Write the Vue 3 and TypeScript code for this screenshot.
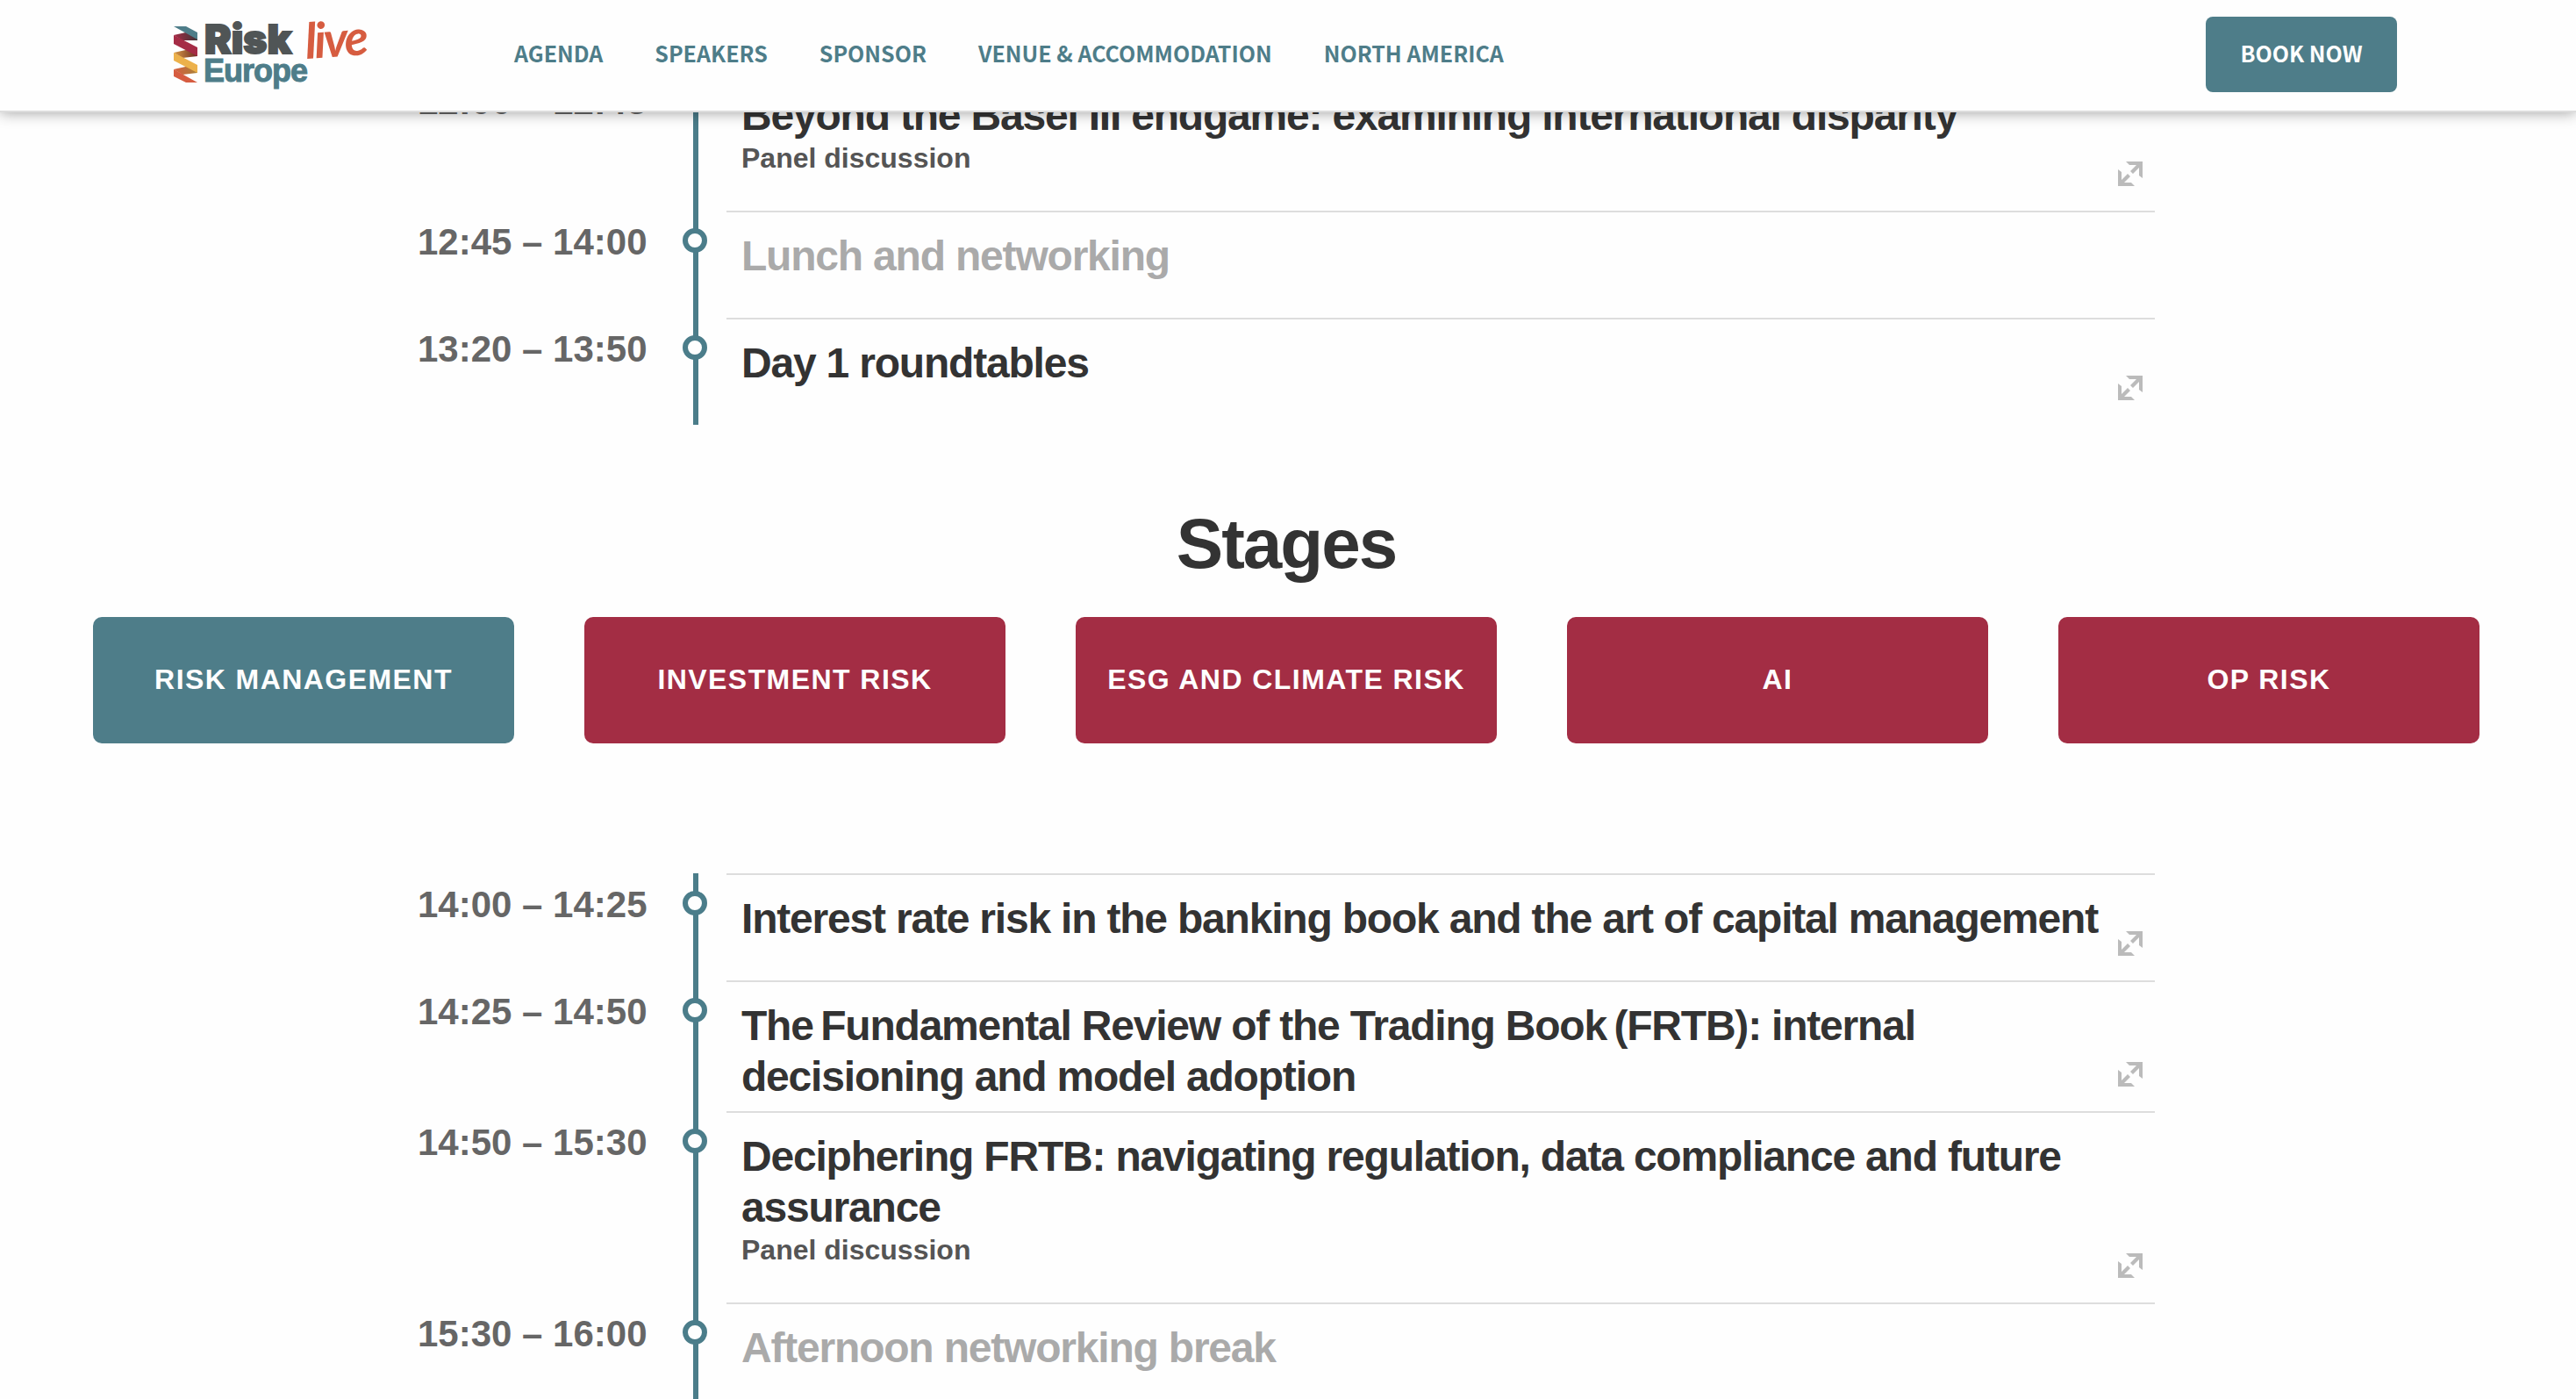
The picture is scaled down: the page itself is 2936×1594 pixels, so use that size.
<script setup lang="ts">
interface Session {
  time: string
  title: string
  kind?: string
  muted?: boolean
}

const navLinks: string[] = ['AGENDA', 'SPEAKERS', 'SPONSOR', 'VENUE & ACCOMMODATION', 'NORTH AMERICA']

const stages: string[] = ['RISK MANAGEMENT', 'INVESTMENT RISK', 'ESG AND CLIMATE RISK', 'AI', 'OP RISK']
const activeStage = 'RISK MANAGEMENT'

const schedule: { id: string; sessions: Session[] }[] = [
  {
    id: 'morning',
    sessions: [
      {
        time: '12:00 – 12:45',
        title: 'Beyond the Basel III endgame: examining international disparity',
        kind: 'Panel discussion',
      },
      { time: '12:45 – 14:00', title: 'Lunch and networking', muted: true },
      { time: '13:20 – 13:50', title: 'Day 1 roundtables' },
    ],
  },
  {
    id: 'afternoon',
    sessions: [
      { time: '14:00 – 14:25', title: 'Interest rate risk in the banking book and the art of capital management' },
      {
        time: '14:25 – 14:50',
        title: 'The\u2009Fundamental Review of the Trading Book\u2009(FRTB): internal decisioning and model adoption',
      },
      {
        time: '14:50 – 15:30',
        title: 'Deciphering FRTB: navigating regulation, data compliance and future assurance',
        kind: 'Panel discussion',
      },
      { time: '15:30 – 16:00', title: 'Afternoon networking break', muted: true },
    ],
  },
]
</script>

<template>
  <div class="page">
    <header class="site-header">
      <a class="logo" href="#" aria-label="Risk Live Europe">
        <svg width="224" height="96" viewBox="0 0 224 96">
          <defs>
            <linearGradient id="fold-red" x1="0" x2="1">
              <stop offset="0" stop-color="#a52c46" />
              <stop offset="1" stop-color="#3f3438" />
            </linearGradient>
            <linearGradient id="fold-gold" x1="0" x2="1">
              <stop offset="0" stop-color="#d99a45" />
              <stop offset="1" stop-color="#6b2a24" />
            </linearGradient>
            <linearGradient id="fold-orange" x1="0" x2="1">
              <stop offset="0" stop-color="#d65c40" />
              <stop offset="1" stop-color="#a98238" />
            </linearGradient>
          </defs>
          <path d="M0 26 L18 22 L27 27 V32 L10 32 Z" fill="url(#fold-red)" />
          <path d="M0 46 L18 42 L27 46 V50 L10 52 Z" fill="url(#fold-gold)" />
          <path d="M0 65 L18 61 L27 65 V69 L10 71 Z" fill="url(#fold-orange)" />
          <path d="M0 16 H14 L27 23 V31 Z" fill="#4e7d89" />
          <path d="M0 26 L27 40 V50 L0 36 Z" fill="#a52c46" />
          <path d="M0 46 L27 60 V69 L0 55 Z" fill="#ecb14b" />
          <path d="M0 65 L27 80 H14 L0 73 Z" fill="#d65c40" />
          <text class="logo-risk" x="35" y="47">Risk</text>
          <text class="logo-europe" x="34" y="79">Europe</text>
          <text class="logo-live" x="151" y="53" transform="rotate(-4 151 53)">live</text>
        </svg>
      </a>
      <nav class="nav">
        <a v-for="link in navLinks" :key="link" href="#">{{ link }}</a>
      </nav>
      <button class="book" type="button">BOOK NOW</button>
    </header>

    <main>
      <template v-for="block in schedule" :key="block.id">
        <section v-if="block.id === 'afternoon'" class="stages">
          <h2>Stages</h2>
          <div class="stage-list">
            <button
              v-for="stage in stages"
              :key="stage"
              type="button"
              class="stage"
              :class="{ active: stage === activeStage }"
            >
              {{ stage }}
            </button>
          </div>
        </section>

        <ol class="timeline" :class="block.id">
          <li v-for="session in block.sessions" :key="session.time" class="session">
            <time>{{ session.time }}</time>
            <div class="rail"><span class="dot"></span></div>
            <article :class="{ muted: session.muted }">
              <h3>{{ session.title }}</h3>
              <p v-if="session.kind">{{ session.kind }}</p>
              <button v-if="!session.muted" class="expand" type="button" aria-label="Expand session">
                <svg width="28" height="28" viewBox="0 0 28 28" fill="#bbb">
                  <path d="M9 0 H28 V19 L24 16 V7 L17 14 L14 11 L21 4 H13 Z" />
                  <path d="M0 9 L4 12 V21 L11 14 L14 17 L7 24 H15 L19 28 H0 Z" />
                </svg>
              </button>
            </article>
          </li>
        </ol>
      </template>
    </main>
  </div>
</template>

<style>
body {
  background: #fefefe;
  overflow: hidden;
}
</style>

<style scoped>
.page {
  height: 100vh;
  overflow: hidden;
  font-family: 'Liberation Sans', Arial, sans-serif;
  font-weight: 700;
  color: #333;
}

.site-header {
  position: relative;
  z-index: 2;
  display: flex;
  align-items: center;
  box-sizing: border-box;
  height: 128px;
  padding: 0 204px 2px 198px;
  background: #fefefe;
  border-bottom: 2px solid #ddd;
  box-shadow: 0 0 16px rgba(0, 0, 0, 0.4);
  font-family: 'Noto Sans CJK SC', 'Noto Sans', sans-serif;
}

.logo svg,
.logo {
  display: block;
  height: 96px;
}

.logo-risk {
  font: 900 46px Inter, sans-serif;
  fill: #505556;
  stroke: #505556;
  stroke-width: 2px;
}

.logo-europe {
  font: 700 36px 'Liberation Sans', sans-serif;
  letter-spacing: -1px;
  fill: #4e7d89;
  stroke: #4e7d89;
  stroke-width: 1px;
}

.logo-live {
  font: italic 700 56px Lato, sans-serif;
  letter-spacing: -3px;
  fill: #d65c40;
}

.nav {
  display: flex;
  gap: 59px;
  margin-left: 164px;
  padding-bottom: 4px;
}

.nav a {
  font-size: 25px;
  line-height: 36px;
  color: #4e7d89;
  text-decoration: none;
}

.book {
  width: 218px;
  height: 86px;
  margin-left: auto;
  padding: 0 0 4px;
  border: 0;
  border-radius: 8px;
  background: #4e7d89;
  color: #fefefe;
  font: inherit;
  font-size: 25px;
}

.timeline {
  margin: 0 480px 0 476px;
  padding: 0;
  list-style: none;
}

.morning {
  margin-top: -48px;
}

.session {
  display: flex;
  min-height: 122px;
}

time {
  width: 302px;
  padding-top: 11px;
  font-size: 42px;
  line-height: 50px;
  color: #666;
}

.rail {
  display: flex;
  justify-content: center;
  width: 28px;
  margin-right: 22px;
  background: linear-gradient(#4b7d8a, #4b7d8a) 12px 0 / 6px 100% no-repeat;
}

.dot {
  box-sizing: border-box;
  width: 28px;
  height: 28px;
  margin-top: 20px;
  border: 6px solid #4b7d8a;
  border-radius: 50%;
  background: #fefefe;
}

article {
  position: relative;
  flex: 1;
  box-sizing: border-box;
  padding: 21px 60px 10px 17px;
  border-top: 2px solid #ddd;
}

h3 {
  margin: 0;
  font-size: 48px;
  line-height: 58px;
  letter-spacing: -0.025em;
}

.muted h3 {
  color: #aaa;
}

article p {
  margin: 0 0 31px;
  font-size: 32px;
  line-height: 38px;
  color: #555;
}

.expand {
  position: absolute;
  right: 14px;
  bottom: 28px;
  padding: 0;
  border: 0;
  background: none;
}

.expand svg {
  display: block;
}

.stages {
  padding: 88px 110px 148px 106px;
}

h2 {
  margin: 0 0 35px;
  font-size: 80px;
  line-height: 96px;
  letter-spacing: -0.025em;
  text-align: center;
}

.stage-list {
  display: grid;
  grid-template-columns: repeat(5, 1fr);
  gap: 80px;
}

.stage {
  height: 144px;
  padding: 0 0 2px;
  border: 0;
  border-radius: 10px;
  background: #a32d44;
  color: #fefefe;
  font: inherit;
  font-size: 32px;
  letter-spacing: 0.045em;
}

.stage.active {
  background: #4e7d89;
}
</style>
